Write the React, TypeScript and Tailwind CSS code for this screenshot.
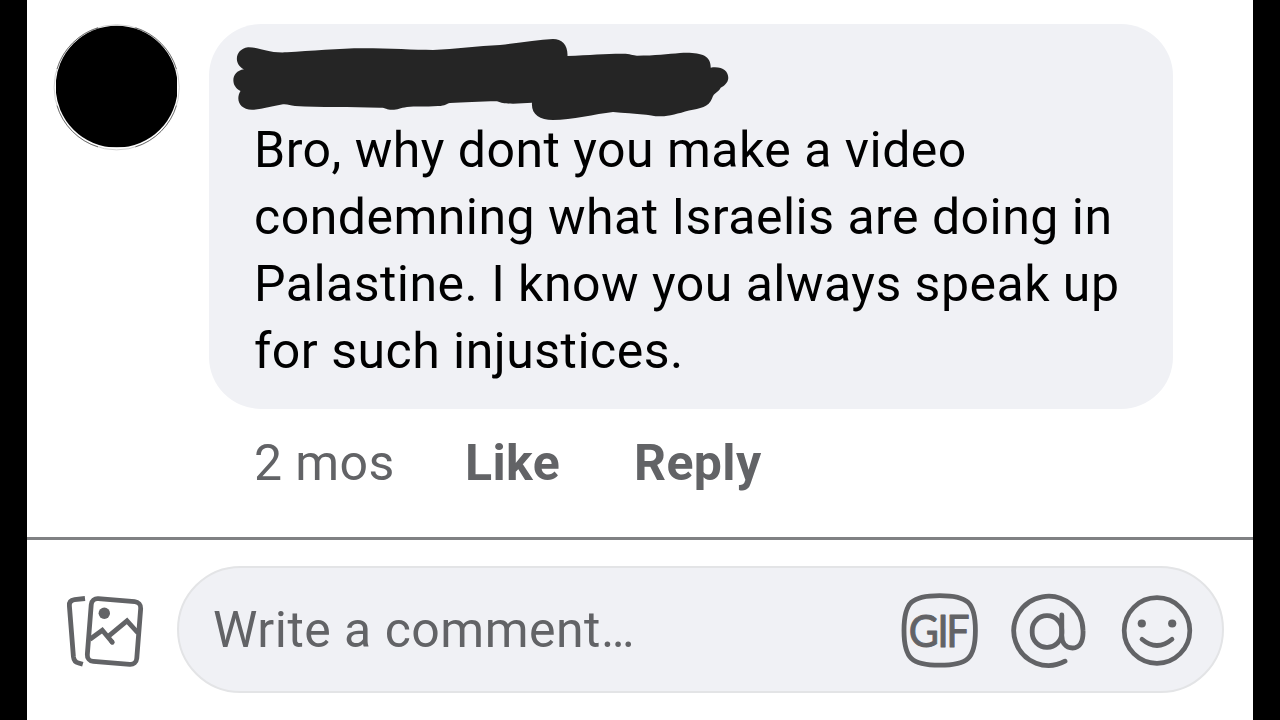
import { useState } from "react";


const comment_lines = [
    "Bro, why dont you make a video",
    "condemning what Israelis are doing in",
    "Palastine. I know you always speak up",
    "for such injustices.",
];

function Avatar() {
    return (
        <svg className="ml-[26px] h-[128px] w-[128px] shrink-0" viewBox="0 0 128 128" fill="none">
            <clipPath id="avatar_clip">
                <rect x="3" y="2.300" width="121" height="122" />
            </clipPath>
            <circle cx="63.700" cy="64.300" r="62.600" stroke="#d2d2d2" strokeWidth="1" />
            <g stroke="#555" strokeWidth="0.800">
                <path d="M4 46A62.400 62.400 0 0 1 45 4.700" />
                <path d="M82.400 4.700A62.400 62.400 0 0 1 123.400 46" />
                <path d="M123.400 82.600A62.400 62.400 0 0 1 82.400 123.900" />
                <path d="M45 123.900A62.400 62.400 0 0 1 4 82.600" />
            </g>
            <circle cx="63.700" cy="63.700" r="61" fill="#000" clipPath="url(#avatar_clip)" />
        </svg>
    )
}

function HiddenName() {
    return (
        <svg className="ml-[21px] h-[86px] w-[500px]" viewBox="230 36 500 86" fill="#252525">
            <path d="M248 47.3C259 47 268 53.5 287 52.3C310 51 340 48.3 363 48.3C390 48.5 415 49.8 433 50C455 49 478 45.8 500 45C520 42.5 538 40 553 39C562 39 568 45 567.5 56C590 55 607 53.6 623 53.7C630 53.7 633 55.5 637 55.7C655 55.7 668 54 680 53C700 52 711 55 710.7 67.7C722 66 728.3 71 728.3 78C728 83 724 86 720.7 87.7C718 93 714 92 712 98.5C709 107 700 108.5 689 110.5C678 113.5 669 116.5 660 116.3C653 116.3 652 115 646 114.7C634 113.5 624 113 613 112C595 114 572 120 553 120C539 120 531 114 532 102.7L513 103.7C505 103.7 502 103.3 497 101.3C480 101.5 463 102.5 450 103C446 103.5 446 106 438 106C425 107 415 106 407 107C400 108 398 109.8 392 109.8C386 109.8 386 107.5 380 107.7C350 107 320 107.5 295 106C290 105.5 288 104 283 104.3C272 106 262 109.7 252 109.7C239 109.5 235.5 99 240.5 91C230 86 231 71 244 69.3C233 64 235 49 248 47.3Z" />
        </svg>
    )
}

function PhotosIcon() {
    return (
        <svg className="h-20 w-[84px]" viewBox="0 0 84 80" fill="none" stroke="#626366" strokeWidth="4.800">
            <path d="M21 6.500L10.500 7.700Q4.900 8.400 5.400 14L9.400 64.500Q10 70 14.500 71L18.800 72.200" />
            <rect x="25.200" y="8" width="49.600" height="63" rx="6.500" transform="rotate(4.500 50 39.500)" />
            <path d="M26 47.300L38.300 38.300L48.300 50.300" />
            <path d="M48 50L48.300 50.300" strokeLinecap="round" />
            <path d="M44.300 44.300L63 28.800L74 41" />
            <circle cx="40.300" cy="21.300" r="5.700" fill="#626366" stroke="none" />
        </svg>
    )
}

function GifIcon() {
    return (
        <svg className="h-20 w-20 opacity-[0.999]" viewBox="0 0 80 80" fill="none" stroke="#626366">
            <path d="M40.700 5.600C68.500 5.600 76.400 12 76.400 40.400S68.500 75.200 40.700 75.200S5 68.800 5 40.400S12.900 5.600 40.700 5.600Z" strokeWidth="4.800" />
            <text className="font-['Lato',sans-serif] text-[45px]" transform="scale(0.920 1)" x="10.700 41.500 51.500" y="57.200" fill="#626366" strokeWidth="1" strokeLinejoin="round">GIF</text>
        </svg>
    )
}

function MentionIcon() {
    return (
        <svg className="h-20 w-20" viewBox="0 0 80 80" fill="none" stroke="#626366" strokeWidth="4.800" strokeLinecap="round">
            <path d="M57 71.200A34.600 34.600 0 1 1 75 40.400C75.500 51.500 72 58 64.500 58C57.500 58 53.800 52.500 53.800 45.500V25" />
            <rect x="24.200" y="25.700" width="29.600" height="31.600" rx="14.500" />
        </svg>
    )
}

function SmileIcon() {
    return (
        <svg className="h-20 w-20" viewBox="0 0 80 80" fill="none" stroke="#626366" strokeWidth="4.700" strokeLinecap="round">
            <circle cx="40" cy="40.500" r="32.800" />
            <path d="M25 49.200Q40 61.800 55 49.200" />
            <circle cx="24.800" cy="33.500" r="4.100" fill="#626366" stroke="none" />
            <circle cx="55.200" cy="33.500" r="4.100" fill="#626366" stroke="none" />
        </svg>
    )
}

export default function App() {
    const [comment, setComment] = useState("");

    const handleCommentChange = (event:React.FormEvent<HTMLInputElement>) => {
        setComment(event.currentTarget.value);
    }

    return (
        <main className="h-[720px] w-[1280px] overflow-hidden bg-black px-[27px] font-['Roboto',sans-serif] text-[50px]">
            <div className="flex h-full flex-col bg-white">
                <section className="flex h-[537px] shrink-0 items-start pt-[23px]">
                    <Avatar />
                    <div className="ml-[28px] pt-px">
                        <div className="h-[385px] w-[964px] rounded-[52px] bg-[#f0f1f5] pt-3">
                            <HiddenName />
                            <p className="-mt-[5px] pl-[45px] leading-[67px] tracking-[0.48px] whitespace-nowrap text-black">
                                {comment_lines.map((line) => (
                                    <span key={line} className="block">{line}</span>
                                ))}
                            </p>
                        </div>
                        <div className="mt-[21px] flex pl-[45px] leading-[67px] tracking-[0.4px] whitespace-nowrap text-[#626366]">
                            <span className="w-[211px]">2 mos</span>
                            <button className="w-[169px] text-left font-bold">Like</button>
                            <button className="text-left font-bold">Reply</button>
                        </div>
                    </div>
                </section>
                <div className="h-[3px] shrink-0 bg-[#808183]" />
                <section className="flex items-start pt-[26px]">
                    <button className="mt-[26px] ml-[37px]">
                        <PhotosIcon />
                    </button>
                    <div className="ml-[29px] flex h-[127px] w-[1047px] items-center rounded-full border-2 border-[#e3e4e6] bg-[#f0f1f5] pl-[34px]">
                        <input
                            className="w-[686px] pt-[2px] tracking-[0.48px] text-[#626366] outline-none placeholder:text-[#626366] placeholder:opacity-100"
                            placeholder="Write a comment…"
                            value={comment}
                            onChange={handleCommentChange}
                        />
                        <div className="flex gap-[29px]">
                            <GifIcon />
                            <MentionIcon />
                            <SmileIcon />
                        </div>
                    </div>
                </section>
            </div>
        </main>
    )
}
